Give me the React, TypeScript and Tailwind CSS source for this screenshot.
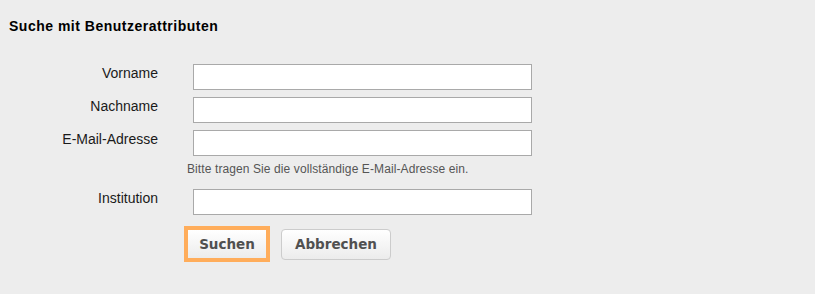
import React from 'react';

const fields = [
  { label: 'Vorname', hint: '' },
  { label: 'Nachname', hint: '' },
  { label: 'E-Mail-Adresse', hint: 'Bitte tragen Sie die vollständige E-Mail-Adresse ein.' },
  { label: 'Institution', hint: '' },
];

const App: React.FC = () => {
  return (
    <div className="min-h-screen bg-[#ededed] pt-[18px] pl-[9px] font-['Liberation_Sans',Arial,sans-serif] text-[#111]">
      <h2 className="text-[14px] leading-4 font-bold tracking-[0.5px] text-black">Suche mit Benutzerattributen</h2>

      <form className="mt-[30px] grid grid-cols-[149px_1fr] gap-x-[29px] gap-y-[7px]">
        {fields.map((field) => (
          <React.Fragment key={field.label}>
            <label className="pt-px text-right text-[14px] leading-4 text-[#1a1a1a]">{field.label}</label>
            <div>
              <input
                type="text"
                className="ml-[6px] block h-[26px] w-[339px] border border-[#a9a9a9] bg-white outline-none"
              />
              {field.hint && (
                <p className="mt-[6px] mb-[6px] text-[12px] leading-[14px] tracking-[0.1px] text-[#555]">{field.hint}</p>
              )}
            </div>
          </React.Fragment>
        ))}

        <div />
        <div className="mt-[7px] flex items-start gap-[14px] font-['DejaVu_Sans',Verdana,sans-serif] text-[13.5px] font-bold text-[#505050]">
          <button
            type="submit"
            className="h-[30px] w-[80px] rounded-none border border-[#ccc] bg-gradient-to-b from-white to-[#ececec] outline-4 outline-offset-[-1px] outline-[#ffad5b]"
          >
            Suchen
          </button>
          <button
            type="button"
            className="h-[31px] w-[110px] rounded-[4px] border border-[#ccc] bg-gradient-to-b from-white to-[#ececec]"
          >
            Abbrechen
          </button>
        </div>
      </form>
    </div>
  );
};

export default App;
